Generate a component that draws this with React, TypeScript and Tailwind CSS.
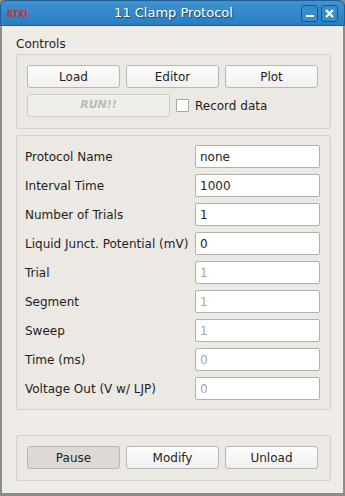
import React from 'react';

const font = { fontFamily: '"DejaVu Sans", "Liberation Sans", sans-serif' };

const fields = [
    { label: 'Protocol Name', value: 'none', enabled: true },
    { label: 'Interval Time', value: '1000', enabled: true },
    { label: 'Number of Trials', value: '1', enabled: true },
    { label: 'Liquid Junct. Potential (mV)', value: '0', enabled: true },
    { label: 'Trial', value: '1', enabled: false },
    { label: 'Segment', value: '1', enabled: false },
    { label: 'Sweep', value: '1', enabled: false },
    { label: 'Time (ms)', value: '0', enabled: false },
    { label: 'Voltage Out (V w/ LJP)', value: '0', enabled: false },
];

function QtButton({ children, pressed }: { children: React.ReactNode; pressed?: boolean }) {
    return (
        <div
            className={
                'w-[93px] h-[23px] flex items-center justify-center rounded-[3px] border border-[#b9b5b1] text-[12px] text-[#1e1e1e] ' +
                (pressed ? 'bg-[#dddad6]' : 'bg-gradient-to-b from-[#fdfdfd] to-[#f1f0ef]')
            }
        >
            {children}
        </div>
    );
}

function GroupBox({ children, className }: { children: React.ReactNode; className?: string }) {
    return (
        <div className={'w-[315px] border border-[#d6d2ce] bg-[#ece8e4] rounded-[2px] ' + (className ?? '')}>
            {children}
        </div>
    );
}

export default function App() {
    return (
        <div className="w-[345px] h-[496px] bg-[#8c8c8c] flex flex-col" style={font}>
            {/* title bar */}
            <div className="h-[26px] rounded-t-[6px] border border-[#1f5f94] bg-gradient-to-b from-[#3f93d2] to-[#2a7dc0] flex items-center relative">
                <span className="absolute left-[6px] top-[10px] text-[8px] font-bold text-[#c8322b] leading-none">RTXI</span>
                <span className="flex-1 text-center text-[13px] text-white [text-shadow:1px_1px_1px_#1a4a70] pl-[2px]">
                    11 Clamp Protocol
                </span>
                <div className="absolute right-[6px] top-[4px] flex gap-[3px]">
                    <div className="w-[17px] h-[17px] rounded-[3px] border border-[#1d5585] bg-[#3a8cca] flex items-end justify-center pb-[4px]">
                        <div className="w-[8px] h-[2px] bg-white" />
                    </div>
                    <div className="w-[17px] h-[17px] rounded-[3px] border border-[#1d5585] bg-[#3a8cca] flex items-center justify-center">
                        <svg width="9" height="9" viewBox="0 0 9 9">
                            <path d="M1 1 L8 8 M8 1 L1 8" stroke="white" strokeWidth="2.2" />
                        </svg>
                    </div>
                </div>
            </div>

            {/* body */}
            <div className="flex-1 bg-[#efebe7] mx-[2px] mb-[3px] flex flex-col pl-[14px]">
                <div className="h-[28px] flex items-end pb-[1px] text-[12px] text-[#1e1e1e]">Controls</div>

                <GroupBox className="px-[10px] pt-[10px] pb-[11px] flex flex-col gap-[6px]">
                    <div className="flex gap-[6px]">
                        <QtButton>Load</QtButton>
                        <QtButton>Editor</QtButton>
                        <QtButton>Plot</QtButton>
                    </div>
                    <div className="flex items-center">
                        <div className="w-[143px] h-[23px] flex items-center justify-center rounded-[3px] border border-[#cfcbc7] bg-[#f0eeeb] text-[11px] italic font-bold text-[#bdbab6]">
                            RUN!!
                        </div>
                        <div className="ml-[6px] w-[13px] h-[13px] border border-[#a9a5a1] bg-white rounded-[1px]" />
                        <span className="ml-[6px] text-[12px] text-[#1e1e1e]">Record data</span>
                    </div>
                </GroupBox>

                <GroupBox className="mt-[6px] pl-[8px] pr-[10px] py-[9px] flex flex-col gap-[6px]">
                    {fields.map((f) => (
                        <div key={f.label} className="flex items-center justify-between h-[23px]">
                            <span className="text-[12px] text-[#1e1e1e] whitespace-nowrap">{f.label}</span>
                            <div className="w-[125px] h-[23px] bg-white border border-[#b3afab] rounded-[2px] flex items-center px-[4px]">
                                <span className={'text-[12px] ' + (f.enabled ? 'text-[#1e1e1e]' : 'text-[#a6a6a6]')}>
                                    {f.value}
                                </span>
                            </div>
                        </div>
                    ))}
                </GroupBox>

                <GroupBox className="mt-[25px] px-[10px] pt-[10px] pb-[11px] flex gap-[6px]">
                    <QtButton pressed>Pause</QtButton>
                    <QtButton>Modify</QtButton>
                    <QtButton>Unload</QtButton>
                </GroupBox>
            </div>
        </div>
    );
}
